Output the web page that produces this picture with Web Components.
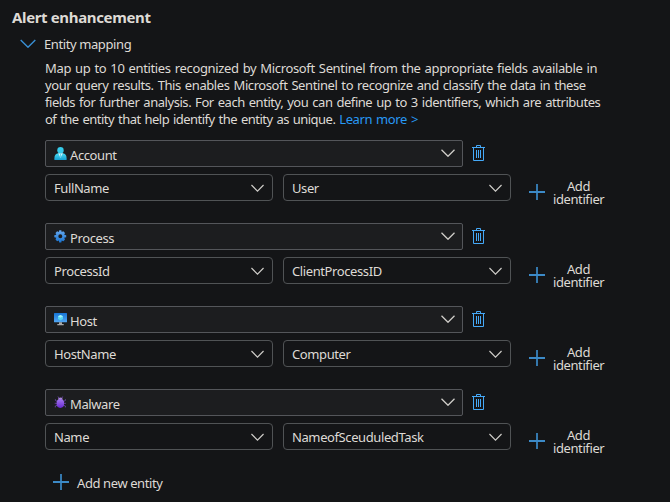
<!DOCTYPE html>
<html lang="en"><head><meta charset="utf-8"><title>Alert enhancement</title>
<style>
html,body{margin:0;background:#141517}
body{height:502px;overflow:hidden;font:13px/17px "Noto Sans",sans-serif;letter-spacing:-.4px;color:#dedad5}
</style></head><body>
<alert-panel></alert-panel>
<script>
const def=(name,html,setup)=>customElements.define(name,class extends HTMLElement{
  connectedCallback(){
    if(this.shadowRoot)return;
    const t=document.createElement('template');t.innerHTML=html;
    this.attachShadow({mode:'open'}).append(t.content.cloneNode(true));
    if(setup)setup(this,this.shadowRoot);
  }
});
const icons={
 account:'<defs><linearGradient id="a" x2="0" y2="1"><stop stop-color="#4adcf4"/><stop offset="1" stop-color="#159fd0"/></linearGradient></defs><path d="M.4 13V11.2Q.4 7 4.3 6.3H8.8Q12.6 7 12.6 11.2V13Z" fill="url(#a)"/><path d="M4.3 6.3L6.5 10.8L8.8 6.3Z" fill="#e3f7ff"/><path d="M5.8 7H7.2L6.9 8.1L7.4 10L6.5 11L5.6 10L6.1 8.1Z" fill="#63d2eb"/><circle cx="6.5" cy="3.2" r="3.2" fill="#35cbea"/>',
 process:'<defs><linearGradient id="p" x2="0" y2="1"><stop stop-color="#67a9f0"/><stop offset="1" stop-color="#1973cf"/></linearGradient></defs><path fill="url(#p)" fill-rule="evenodd" d="M5.3 .3H7.3L7.7 2L9.3 1.3L11 2.9L10.2 4.8L12.2 5.2V7.3L10.2 7.7L11 9.6L9.4 11.2L7.7 10.4L7.3 12.4H5.2L4.8 10.4L3.1 11.2L1.5 9.6L2.3 7.8L.3 7.3V5.2L2.3 4.8L1.5 2.9L3.1 1.3L4.8 2ZM6.3 4.3A2 2 0 1 0 6.3 8.3A2 2 0 1 0 6.3 4.3Z"/>',
 host:'<defs><linearGradient id="h" x2="0" y2="1"><stop stop-color="#1775d5"/><stop offset="1" stop-color="#52a7f4"/></linearGradient></defs><rect width="13" height="9.2" rx=".5" fill="url(#h)"/><path d="M6.5 2L9 3.3V6.1L6.5 7.6L4 6.1V3.3Z" fill="#54d5ef"/><path d="M6.5 2L9 3.3L6.5 4.7L4 3.3Z" fill="#a5f2fb"/><path d="M5 9.2H8V11H9.7V12.3H3.3V11H5Z" fill="#a6a8aa"/>',
 malware:'<defs><linearGradient id="m" x2="0" y2="1"><stop stop-color="#a477f2"/><stop offset="1" stop-color="#6829cf"/></linearGradient></defs><path d="M4 .5L4.8 2.2M8.7 .5L7.9 2.2M1.4 3.2V4.5L3.5 5.5M11.4 3.2V4.5L9.2 5.5M.7 7.3H12M1.3 11.4V10L3.6 9M11.4 11.4V10L9.1 9" fill="none" stroke="#7049ad" stroke-width=".8"/><path d="M4 3.5Q4 1.5 6.35 1.5Q8.7 1.5 8.7 3.5Z" fill="#a98bd5"/><ellipse cx="6.35" cy="7.5" rx="3.8" ry="4.4" fill="url(#m)"/>'
};
def('ui-chevron','<style>:host{display:block;width:14px;height:8px;color:#d0ceca}svg{display:block;width:100%;height:100%}</style><svg viewBox="0 0 14 8"><path d="M.5 .8L7 7.3L13.5 .8" fill="none" stroke="currentColor" stroke-width="1.25"/></svg>');
def('ui-plus','<style>:host{display:block;width:16px;height:16px;flex:none}svg{display:block}</style><svg width="16" height="16"><path d="M8 0V16" stroke="#3478ad" stroke-width="2"/><path d="M0 8H16" stroke="#3c8ac7" stroke-width="2"/></svg>');
def('entity-icon','<style>:host{display:block;width:13px;height:13px}svg{display:block}</style><svg width="13" height="13" viewBox="0 0 13 13"></svg>',(h,r)=>{r.querySelector('svg').innerHTML=icons[h.getAttribute('name')]});
def('trash-button','<style>:host{display:block;width:13px;height:16px}svg{display:block}</style><svg width="13" height="16" viewBox="0 0 13 16" fill="none" stroke="#45a9f8"><path d="M0 2.5H13M4.5 2V.5H8.5V2M1.5 3V15.5H11.5V3M4.5 5V13M6.5 5V13M8.5 5V13"/></svg>');
def('field-select',`<style>:host{display:flex;align-items:center;box-sizing:border-box;width:228px;height:27px;border:1px solid #505355;border-radius:4px;padding:1px 8px 0 8px}
::slotted(*){white-space:nowrap}ui-chevron{margin-left:auto;width:13px}</style><slot></slot><ui-chevron></ui-chevron>`);
def('entity-select',`<style>:host{display:flex;align-items:center;box-sizing:border-box;width:418px;height:27px;border:1px solid #54565a;border-radius:2px;background:#1c1d1f;padding:0 7px 0 8px}
::slotted(entity-icon){margin:-1px 3px 0 0}.t{padding-top:3px}ui-chevron{margin-left:auto;margin-top:-1px}</style><slot name="icon"></slot><span class="t"><slot></slot></span><ui-chevron></ui-chevron>`);
customElements.define('entity-group',class extends HTMLElement{
 connectedCallback(){
  if(this.shadowRoot)return;const a=n=>this.getAttribute(n);
  this.attachShadow({mode:'open'}).innerHTML=`<style>:host{display:block;height:83px}
.top{display:grid;grid-template-columns:418px 13px;column-gap:9px;align-items:center;height:27px}trash-button{margin-top:-1px}
.row{display:flex;gap:10px;margin-top:7px;height:27px}.add{display:flex;align-items:center;gap:8px;margin-left:8px;height:36px}
.lab{line-height:13px;width:51px;text-align:center;white-space:nowrap;padding-top:2px}</style>
<div class="top"><entity-select><entity-icon slot="icon" name="${a('icon')}"></entity-icon><slot></slot></entity-select><trash-button></trash-button></div>
<div class="row"><field-select><span>${a('key')}</span></field-select><field-select><span>${a('value')}</span></field-select><div class="add"><ui-plus></ui-plus><div class="lab">Add<br>identifier</div></div></div>`;
 }
});
def('alert-panel',`<style>:host{display:block;height:502px}
h1{font-size:15px;line-height:20px;font-weight:700;letter-spacing:-.36px;margin:0;padding:7px 0 1px 12px}
.sec{display:flex;align-items:center;height:17px;padding:8px 0 0 20px;gap:8px}.sec ui-chevron{width:16px;height:9px;color:#398fd4;margin-top:-3px}
.desc{margin:7px 0 0 45px;height:68px;white-space:nowrap;word-spacing:1px;letter-spacing:-.35px}.desc div{height:17px}.desc .b{letter-spacing:-.41px}.desc .c{letter-spacing:-.45px}.desc .d{letter-spacing:-.52px}.desc a{color:#2899f5;letter-spacing:-.4px}
.list{padding:12px 0 0 45px}.new{display:flex;align-items:center;gap:8px;margin-left:8px;height:20px}.new span{padding-top:3px}</style>
<h1>Alert enhancement</h1><div class="sec"><ui-chevron></ui-chevron><span>Entity mapping</span></div>
<div class="desc"><div>Map up to 10 entities recognized by Microsoft Sentinel from the appropriate fields available in</div><div class="b">your query results. This enables Microsoft Sentinel to recognize and classify the data in these</div><div class="c">fields for further analysis. For each entity, you can define up to 3 identifiers, which are attributes</div><div class="d">of the entity that help identify the entity as unique. <a>Learn more &gt;</a></div></div>
<div class="list"><entity-group icon="account" key="FullName" value="User">Account</entity-group><entity-group icon="process" key="ProcessId" value="ClientProcessID">Process</entity-group><entity-group icon="host" key="HostName" value="Computer">Host</entity-group><entity-group icon="malware" key="Name" value="NameofSceuduledTask">Malware</entity-group><div class="new"><ui-plus></ui-plus><span>Add new entity</span></div></div>`);
</script></body></html>
